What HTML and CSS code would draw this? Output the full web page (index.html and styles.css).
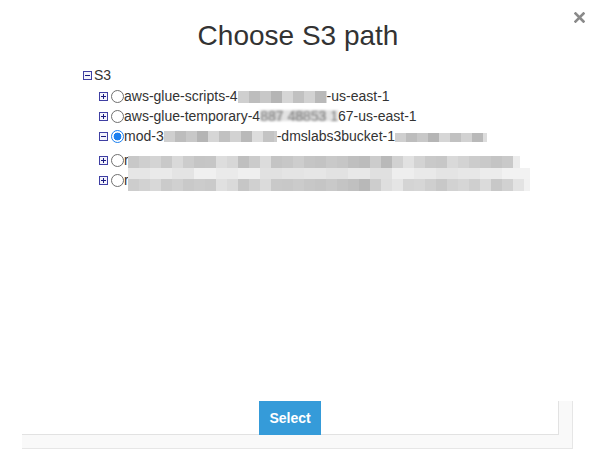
FILE: index.html
```html
<!DOCTYPE html>
<html lang="en">
<head>
<meta charset="utf-8">
<title>Choose S3 path</title>
<link rel="stylesheet" href="styles.css">
</head>
<body>
<div class="modal">
  <button class="close" aria-label="Close">
    <svg width="11" height="11" viewBox="0 0 11 11"><path d="M1.5 1.5 L9.5 9.5 M9.5 1.5 L1.5 9.5" stroke="#8a8a8a" stroke-width="2.6" stroke-linecap="square"/></svg>
  </button>
  <h1 class="title">Choose S3 path</h1>
  <ul class="tree">
    <li>
      <div class="node">
        <svg class="tog" width="9" height="9" viewBox="0 0 9 9"><rect x="0.5" y="0.5" width="8" height="8" fill="#f3f3fb" stroke="#3f3fa3"/><path d="M2 4.5 H7" stroke="#1a1a80"/></svg>
        <span class="label">S3</span>
      </div>
      <ul class="children">
        <li>
          <div class="node">
            <svg class="tog" width="9" height="9" viewBox="0 0 9 9"><rect x="0.5" y="0.5" width="8" height="8" fill="#f3f3fb" stroke="#3f3fa3"/><path d="M2 4.5 H7 M4.5 2 V7" stroke="#1a1a80"/></svg>
            <input class="radio" type="radio" name="path">
            <span class="label">aws-glue-scripts-4<span class="mosaic m1"></span>-us-east-1</span>
          </div>
        </li>
        <li>
          <div class="node">
            <svg class="tog" width="9" height="9" viewBox="0 0 9 9"><rect x="0.5" y="0.5" width="8" height="8" fill="#f3f3fb" stroke="#3f3fa3"/><path d="M2 4.5 H7 M4.5 2 V7" stroke="#1a1a80"/></svg>
            <input class="radio" type="radio" name="path">
            <span class="label">aws-glue-temporary-4<span class="fuzz">887 48853 1</span>67-us-east-1</span>
          </div>
        </li>
        <li>
          <div class="node">
            <svg class="tog" width="9" height="9" viewBox="0 0 9 9"><rect x="0.5" y="0.5" width="8" height="8" fill="#f3f3fb" stroke="#3f3fa3"/><path d="M2 4.5 H7" stroke="#1a1a80"/></svg>
            <input class="radio" type="radio" name="path" checked>
            <span class="label">mod-3<span class="mosaic m2"></span>-dmslabs3bucket-1<span class="mosaic m3"></span></span>
          </div>
          <ul class="children empty"></ul>
        </li>
        <li class="hidden-row">
          <div class="node">
            <svg class="tog" width="9" height="9" viewBox="0 0 9 9"><rect x="0.5" y="0.5" width="8" height="8" fill="#f3f3fb" stroke="#3f3fa3"/><path d="M2 4.5 H7 M4.5 2 V7" stroke="#1a1a80"/></svg>
            <input class="radio" type="radio" name="path">
            <span class="label">r</span>
          </div>
          <span class="redact"></span>
        </li>
        <li>
          <div class="node">
            <svg class="tog" width="9" height="9" viewBox="0 0 9 9"><rect x="0.5" y="0.5" width="8" height="8" fill="#f3f3fb" stroke="#3f3fa3"/><path d="M2 4.5 H7 M4.5 2 V7" stroke="#1a1a80"/></svg>
            <input class="radio" type="radio" name="path">
            <span class="label">r</span>
          </div>
        </li>
      </ul>
    </li>
  </ul>
  <div class="footer">
    <div class="footer-main"><button class="select">Select</button></div>
    <div class="track-v"></div>
    <div class="track-h"></div>
  </div>
</div>
</body>
</html>
```

FILE: styles.css
```css
* { box-sizing: border-box; }
html, body { margin: 0; padding: 0; background: #fff; }
body { font-family: "Liberation Sans", Arial, sans-serif; color: #333; }

.modal {
  position: relative;
  width: 596px;
  height: 461px;
  display: flex;
  flex-direction: column;
  padding-bottom: 12px;
}

.close {
  position: absolute;
  top: 12px;
  right: 11px;
  width: 11px;
  height: 11px;
  padding: 0;
  border: 0;
  background: none;
  display: flex;
}

.title {
  margin: 20px 0 0;
  font-size: 28px;
  line-height: 32px;
  font-weight: normal;
  text-align: center;
  color: #333;
}

.tree, .children {
  list-style: none;
  margin: 0;
  padding: 0;
}
.tree { margin: 13px 0 0 83px; }
.children { padding-left: 16px; }
.children.empty { height: 4px; }
.children > li:first-child { margin-top: 1px; }

.node {
  display: flex;
  align-items: center;
  height: 20px;
  font-size: 14px;
  line-height: 20px;
  white-space: nowrap;
}
.tog { flex: none; display: block; margin-right: 2px; }

.radio {
  -webkit-appearance: none;
  appearance: none;
  flex: none;
  width: 13px;
  min-width: 13px;
  height: 13px;
  margin: 0 0 0 1px;
  border: 1px solid #6f6f6f;
  border-radius: 50%;
  background: #fff;
}
.radio:checked {
  border: 1.5px solid #1a7ff0;
  background: radial-gradient(circle, #1a7ff0 0 3.6px, #fff 4.2px);
}

.label { color: #333; }

.mosaic {
  display: inline-block;
  vertical-align: -2px;
  height: 12px;
  background: linear-gradient(90deg, #cfcfcf 0 11px, #bdbdbd 11px 22px, #c8c8c8 22px 33px, #b5b5b5 33px 44px, #d6d6d6 44px 55px, #c1c1c1 55px 66px, #d2d2d2 66px 77px, #b9b9b9 77px 88px, #dddddd 88px 99px, #c4c4c4 99px 110px, #cdcdcd 110px 121px) 0 0 / 121px 100% repeat-x;
}
.m1 { width: 89px; }
.m2 { width: 113px; height: 11px; vertical-align: -1px; }
.m3 { width: 92px; height: 9px; vertical-align: -1px; }

.fuzz {
  display: inline-block;
  color: #7a7a7a;
  filter: blur(0.8px);
  background: linear-gradient(90deg, #dcdcdc 0 11px, #d2d2d2 11px 22px, #e2e2e2 22px 33px, #cecece 33px 44px, #dfdfdf 44px 55px, #d4d4d4 55px 66px, #e4e4e4 66px 77px, #d6d6d6 77px 88px) 0 4px / 88px 11px no-repeat;
}

.hidden-row { position: relative; }
.redact {
  position: absolute;
  left: 29px;
  top: 6px;
  width: 402px;
  height: 35px;
  background:
    linear-gradient(90deg, #c8c8c8 0 11px, #cfcfcf 11px 22px, #d4d4d4 22px 33px, #c9c9c9 33px 44px, #d9d9d9 44px 55px, #cccccc 55px 66px, #c5c5c5 66px 77px, #c6c6c6 77px 88px, #dddddd 88px 99px, #d7d7d7 99px 110px, #bfbfbf 110px 121px, #cbcbcb 121px 132px, #dcdcdc 132px 143px, #c4c4c4 143px 154px, #c7c7c7 154px 165px, #cdcdcd 165px 176px, #c5c5c5 176px 187px, #c3c3c3 187px 198px, #c9c9c9 198px 209px, #c6c6c6 209px 220px, #bfbfbf 220px 231px, #bcbcbc 231px 242px, #cccccc 242px 253px, #b9b9b9 253px 264px, #d1d1d1 264px 275px, #e1e1e1 275px 286px, #d3d3d3 286px 297px, #c9c9c9 297px 308px, #c7c7c7 308px 319px, #d9d9d9 319px 330px, #d3d3d3 330px 341px, #cccccc 341px 352px, #c9c9c9 352px 363px, #c4c4c4 363px 374px, #c9c9c9 374px 385px, #ececec 385px 392px, #ffffff 392px) 0 0 / 100% 12px no-repeat,
    linear-gradient(90deg, #e6e6e6 0 22px, #eaeaea 22px 44px, #e4e4e4 44px 66px, #f0f0f0 66px 88px, #eaeaea 88px 110px, #efefef 110px 132px, #e1e1e1 132px 154px, #e4e4e4 154px 176px, #e6e6e6 176px 198px, #e2e2e2 198px 220px, #e8e8e8 220px 242px, #e0e0e0 242px 264px, #eeeeee 264px 286px, #e9e9e9 286px 308px, #e4e4e4 308px 330px, #e7e7e7 330px 352px, #ececec 352px 374px, #f2f2f2 374px 402px) 0 12px / 100% 11px no-repeat,
    linear-gradient(90deg, #cdcdcd 0 11px, #d2d2d2 11px 22px, #d8d8d8 22px 33px, #cbcbcb 33px 44px, #d0d0d0 44px 55px, #c9c9c9 55px 66px, #cccccc 66px 77px, #cacaca 77px 88px, #e0e0e0 88px 99px, #dadada 99px 110px, #c6c6c6 110px 121px, #d0d0d0 121px 132px, #dbdbdb 132px 143px, #c9c9c9 143px 154px, #c8c8c8 154px 165px, #cbcbcb 165px 176px, #c7c7c7 176px 187px, #c5c5c5 187px 198px, #c9c9c9 198px 209px, #c4c4c4 209px 220px, #c0c0c0 220px 231px, #b8b8b8 231px 242px, #cdcdcd 242px 253px, #dedede 253px 264px, #e5e5e5 264px 275px, #d4d4d4 275px 286px, #d6d6d6 286px 297px, #cfcfcf 297px 308px, #c8c8c8 308px 319px, #d2d2d2 319px 330px, #d6d6d6 330px 341px, #cfcfcf 341px 352px, #dbdbdb 352px 363px, #c8c8c8 363px 374px, #d1d1d1 374px 385px, #e3e3e3 385px 396px, #f1f1f1 396px) 0 23px / 100% 12px no-repeat;
}

.footer {
  margin: auto 0 0 22px;
  width: 551px;
  display: grid;
  grid-template-columns: 537px 14px;
  grid-template-rows: 34px 14px;
}
.footer-main {
  display: flex;
  justify-content: center;
  align-items: flex-start;
  border-right: 1px solid #e2e2e2;
  border-bottom: 1px solid #e2e2e2;
}
.track-v {
  background: #f9f9f9;
  border-right: 1px solid #e6e6e6;
}
.track-h {
  grid-column: 1 / 3;
  background: #f9f9f9;
  border-right: 1px solid #e6e6e6;
  border-bottom: 1px solid #e6e6e6;
}

.select {
  position: relative;
  width: 62px;
  height: 34px;
  margin: 0;
  padding: 0;
  border: 0;
  border-radius: 0;
  background: #359bd9;
  color: #fff;
  font-family: "Liberation Sans", Arial, sans-serif;
  font-size: 14px;
  font-weight: bold;
  line-height: 34px;
}
```
